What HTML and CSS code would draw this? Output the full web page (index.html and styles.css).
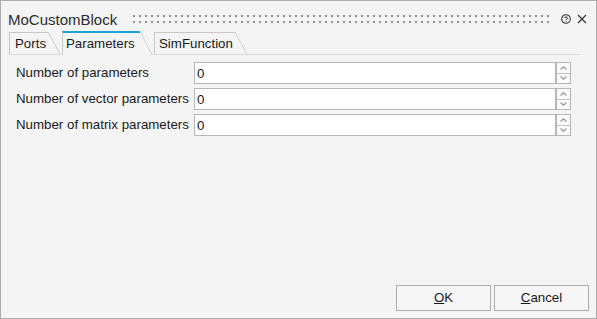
FILE: index.html
```html
<!DOCTYPE html>
<html>
<head>
<meta charset="utf-8">
<link rel="stylesheet" href="styles.css">
</head>
<body>
<div class="window">
  <div class="titlebar">
    <span class="title">MoCustomBlock</span>
    <span class="grip"></span>
    <svg class="help" width="10" height="10" viewBox="0 0 10 10">
      <circle cx="5" cy="5" r="4.3" fill="none" stroke="#333" stroke-width="1.1"/>
      <path d="M3.5 4 C3.5 2.6 6.5 2.6 6.5 4 C6.5 5 5 5 5 6" fill="none" stroke="#333" stroke-width="1"/>
      <rect x="4.5" y="6.6" width="1" height="1" fill="#333"/>
    </svg>
    <svg class="close" width="10" height="10" viewBox="0 0 10 10">
      <path d="M1 1 L9 9 M9 1 L1 9" stroke="#333" stroke-width="1.2"/>
    </svg>
  </div>
  <div class="panel">
    <div class="tabs">
      <div class="tab tab-ports"><span class="tab-label">Ports</span><span class="tab-slant"></span></div>
      <div class="tab tab-params active"><span class="tab-label">Parameters</span><span class="tab-slant"></span></div>
      <div class="tab tab-sim"><span class="tab-label">SimFunction</span><span class="tab-slant"></span></div>
    </div>
    <div class="form">
      <label class="lbl">Number of parameters</label>
      <input class="field" type="text" value="0">
      <div class="spin"><span class="spin-half"><svg width="7" height="4" viewBox="0 0 7 4"><path d="M0.5 3.5 L3.5 0.8 L6.5 3.5" fill="none" stroke="#9a9a9a" stroke-width="1.2"/></svg></span><span class="spin-half down"><svg width="7" height="4" viewBox="0 0 7 4"><path d="M0.5 0.5 L3.5 3.2 L6.5 0.5" fill="none" stroke="#9a9a9a" stroke-width="1.2"/></svg></span></div>

      <label class="lbl">Number of vector parameters</label>
      <input class="field" type="text" value="0">
      <div class="spin"><span class="spin-half"><svg width="7" height="4" viewBox="0 0 7 4"><path d="M0.5 3.5 L3.5 0.8 L6.5 3.5" fill="none" stroke="#9a9a9a" stroke-width="1.2"/></svg></span><span class="spin-half down"><svg width="7" height="4" viewBox="0 0 7 4"><path d="M0.5 0.5 L3.5 3.2 L6.5 0.5" fill="none" stroke="#9a9a9a" stroke-width="1.2"/></svg></span></div>

      <label class="lbl">Number of matrix parameters</label>
      <input class="field" type="text" value="0">
      <div class="spin"><span class="spin-half"><svg width="7" height="4" viewBox="0 0 7 4"><path d="M0.5 3.5 L3.5 0.8 L6.5 3.5" fill="none" stroke="#9a9a9a" stroke-width="1.2"/></svg></span><span class="spin-half down"><svg width="7" height="4" viewBox="0 0 7 4"><path d="M0.5 0.5 L3.5 3.2 L6.5 0.5" fill="none" stroke="#9a9a9a" stroke-width="1.2"/></svg></span></div>
    </div>
  </div>
  <div class="footer">
    <button class="btn"><u>O</u>K</button>
    <button class="btn"><u>C</u>ancel</button>
  </div>
</div>
</body>
</html>
```

FILE: styles.css
```css
* { box-sizing: border-box; }
html, body { margin: 0; padding: 0; }
body {
  font-family: "Liberation Sans", Arial, sans-serif;
  font-size: 13.3px;
  color: #1a1a1a;
  background: #f4f4f4;
}
.window {
  width: 597px;
  height: 319px;
  border: 1px solid #ababab;
  background: #f4f4f4;
  display: flex;
  flex-direction: column;
}
.titlebar {
  display: flex;
  align-items: flex-start;
  height: 28px;
  padding: 10px 9px 0 7px;
}
.title {
  font-size: 15px;
  line-height: 17px;
  color: #2b2b2b;
  white-space: nowrap;
}
.grip {
  flex: 1;
  height: 8px;
  margin: 4px 12px 0 16px;
  background-image:
    linear-gradient(to right, #8e8e8e 2px, transparent 2px),
    linear-gradient(to right, #8e8e8e 2px, transparent 2px);
  background-size: 6px 2px, 6px 2px;
  background-position: 0 0, 0 6px;
  background-repeat: repeat-x;
}
.help { margin-top: 3px; display: block; }
.close { margin-top: 3px; margin-left: 6px; display: block; }

.panel {
  margin: 2px 16px 0 8px;
}
.tabs {
  display: flex;
  align-items: flex-end;
  height: 24px;
  border-bottom: 1px solid #dcdcdc;
}
.tab {
  display: flex;
  height: 22px;
  margin-right: 2px;
}
.tab-label {
  display: block;
  border-top: 1px solid #c8c8c8;
  border-left: 1px solid #c8c8c8;
  line-height: 21px;
  white-space: nowrap;
  color: #1a1a1a;
}
.tab-slant {
  display: block;
  width: 12px;
  background: linear-gradient(to top right, transparent calc(50% - 0.7px), #c4c4c4 50%, transparent calc(50% + 0.7px));
}
.tab-ports .tab-label { width: 39px; padding-left: 5px; }
.tab-params .tab-label { width: 78px; padding-left: 3px; }
.tab-sim .tab-label { width: 81px; padding-left: 4px; }
.tab.active {
  height: 24px;
  margin-bottom: -1px;
  background: #f4f4f4;
}
.tab.active .tab-label {
  border-top: 2px solid #1ea2dc;
  padding-bottom: 1px;
}

.form {
  display: grid;
  grid-template-columns: 178px 362px 15px;
  grid-auto-rows: 22px;
  row-gap: 4px;
  padding: 7px 0 0 7px;
}
.lbl {
  line-height: 22px;
  white-space: nowrap;
}
.field {
  width: 362px;
  height: 22px;
  margin: 0;
  border: 1px solid #b6b6b6;
  background: #ffffff;
  padding: 0 2px;
  font-family: "Liberation Sans", Arial, sans-serif;
  font-size: 13.3px;
  color: #1a1a1a;
  outline: none;
}
.spin {
  display: flex;
  flex-direction: column;
  border: 1px solid #b6b6b6;
  background: #fafafa;
}
.spin-half {
  flex: 1;
  display: flex;
  align-items: center;
  justify-content: center;
}
.spin-half.down { border-top: 1px solid #c4c4c4; }
.spin-half svg { display: block; }

.footer {
  margin-top: auto;
  display: flex;
  justify-content: flex-end;
  gap: 3px;
  padding: 0 7px 7px 0;
}
.btn {
  width: 95px;
  height: 26px;
  margin: 0;
  padding: 0 0 1px 0;
  border: 1px solid #adadad;
  background: #f6f6f6;
  font-family: "Liberation Sans", Arial, sans-serif;
  font-size: 13.3px;
  color: #1a1a1a;
  line-height: 22px;
}
.btn u { text-decoration: underline; text-underline-offset: 1px; }
```
